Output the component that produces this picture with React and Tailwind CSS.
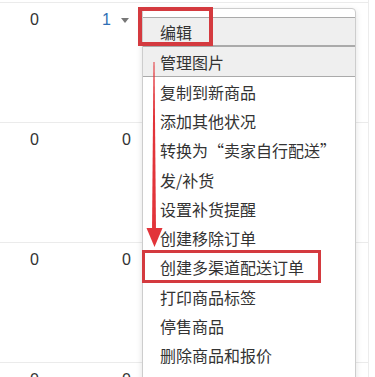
const rows = [
  { a: '0', b: '1', caret: true },
  { a: '0', b: '0' },
  { a: '0', b: '0' },
  { a: '0', b: '0' },
]

const items = [
  '复制到新商品',
  '添加其他状况',
  '转换为“卖家自行配送”',
  '发/补货',
  '设置补货提醒',
  '创建移除订单',
  '创建多渠道配送订单',
  '打印商品标签',
  '停售商品',
  '删除商品和报价',
]

export default function App() {
  return (
    <div
      className="relative w-[375px] h-[377px] overflow-hidden bg-white text-[#333]"
      style={{ fontFamily: '"Liberation Sans", "Noto Sans CJK SC", sans-serif' }}
    >
      {/* table rows */}
      <div className="w-[369px] pt-[2px] border-r border-[#ececec]">
        {rows.map((r, i) => (
          <div key={i} className="flex h-[120px] border-t border-[#ebebeb] pt-[5px] text-[16px] leading-6">
            <div className="w-[39px] text-right">{r.a}</div>
            <div className="w-[92px] flex justify-end items-center h-6">
              {r.caret ? (
                <>
                  <span className="text-[#2f6fb5]">{r.b}</span>
                  <span className="ml-[10px] mr-[2px] w-0 h-0 border-l-[4px] border-r-[4px] border-t-[5px] border-l-transparent border-r-transparent border-t-[#777]" />
                </>
              ) : (
                <span>{r.b}</span>
              )}
            </div>
          </div>
        ))}
      </div>

      {/* dropdown menu */}
      <div
        className="absolute left-[142px] top-[8px] w-[214px] h-[400px] bg-white border border-[#cdcdcd] rounded-t-[4px] shadow-[0_2px_6px_rgba(0,0,0,0.12)] pt-[8px] text-[16px]"
        style={{ fontFamily: '"Noto Sans CJK SC", sans-serif' }}
      >
        <div className="h-[29px] bg-[#efefef] border-y border-[#aaa] pl-[17px] flex items-center">编辑</div>
        <div className="h-[31px] bg-[#efefef] border-y border-[#aaa] pl-[17px] flex items-center">管理图片</div>
        {items.map((t) => (
          <div key={t} className="h-[29.3px] pl-[17px] flex items-center">{t}</div>
        ))}
      </div>

      {/* annotations */}
      <div className="absolute left-[138px] top-[7px] w-[75px] h-[39px] border-[4px] border-[#d43a3f]" />
      <div className="absolute left-[142px] top-[250px] w-[179px] h-[33px] border-[3px] border-[#d43a3f]" />
      <svg className="absolute left-0 top-0" width="375" height="377">
        <polygon points="153.5,62 154.5,62 156,232 152,232" fill="#e2343a" />
        <polygon points="146.5,228 162.5,228 154.5,247" fill="#e2343a" />
      </svg>
    </div>
  )
}
